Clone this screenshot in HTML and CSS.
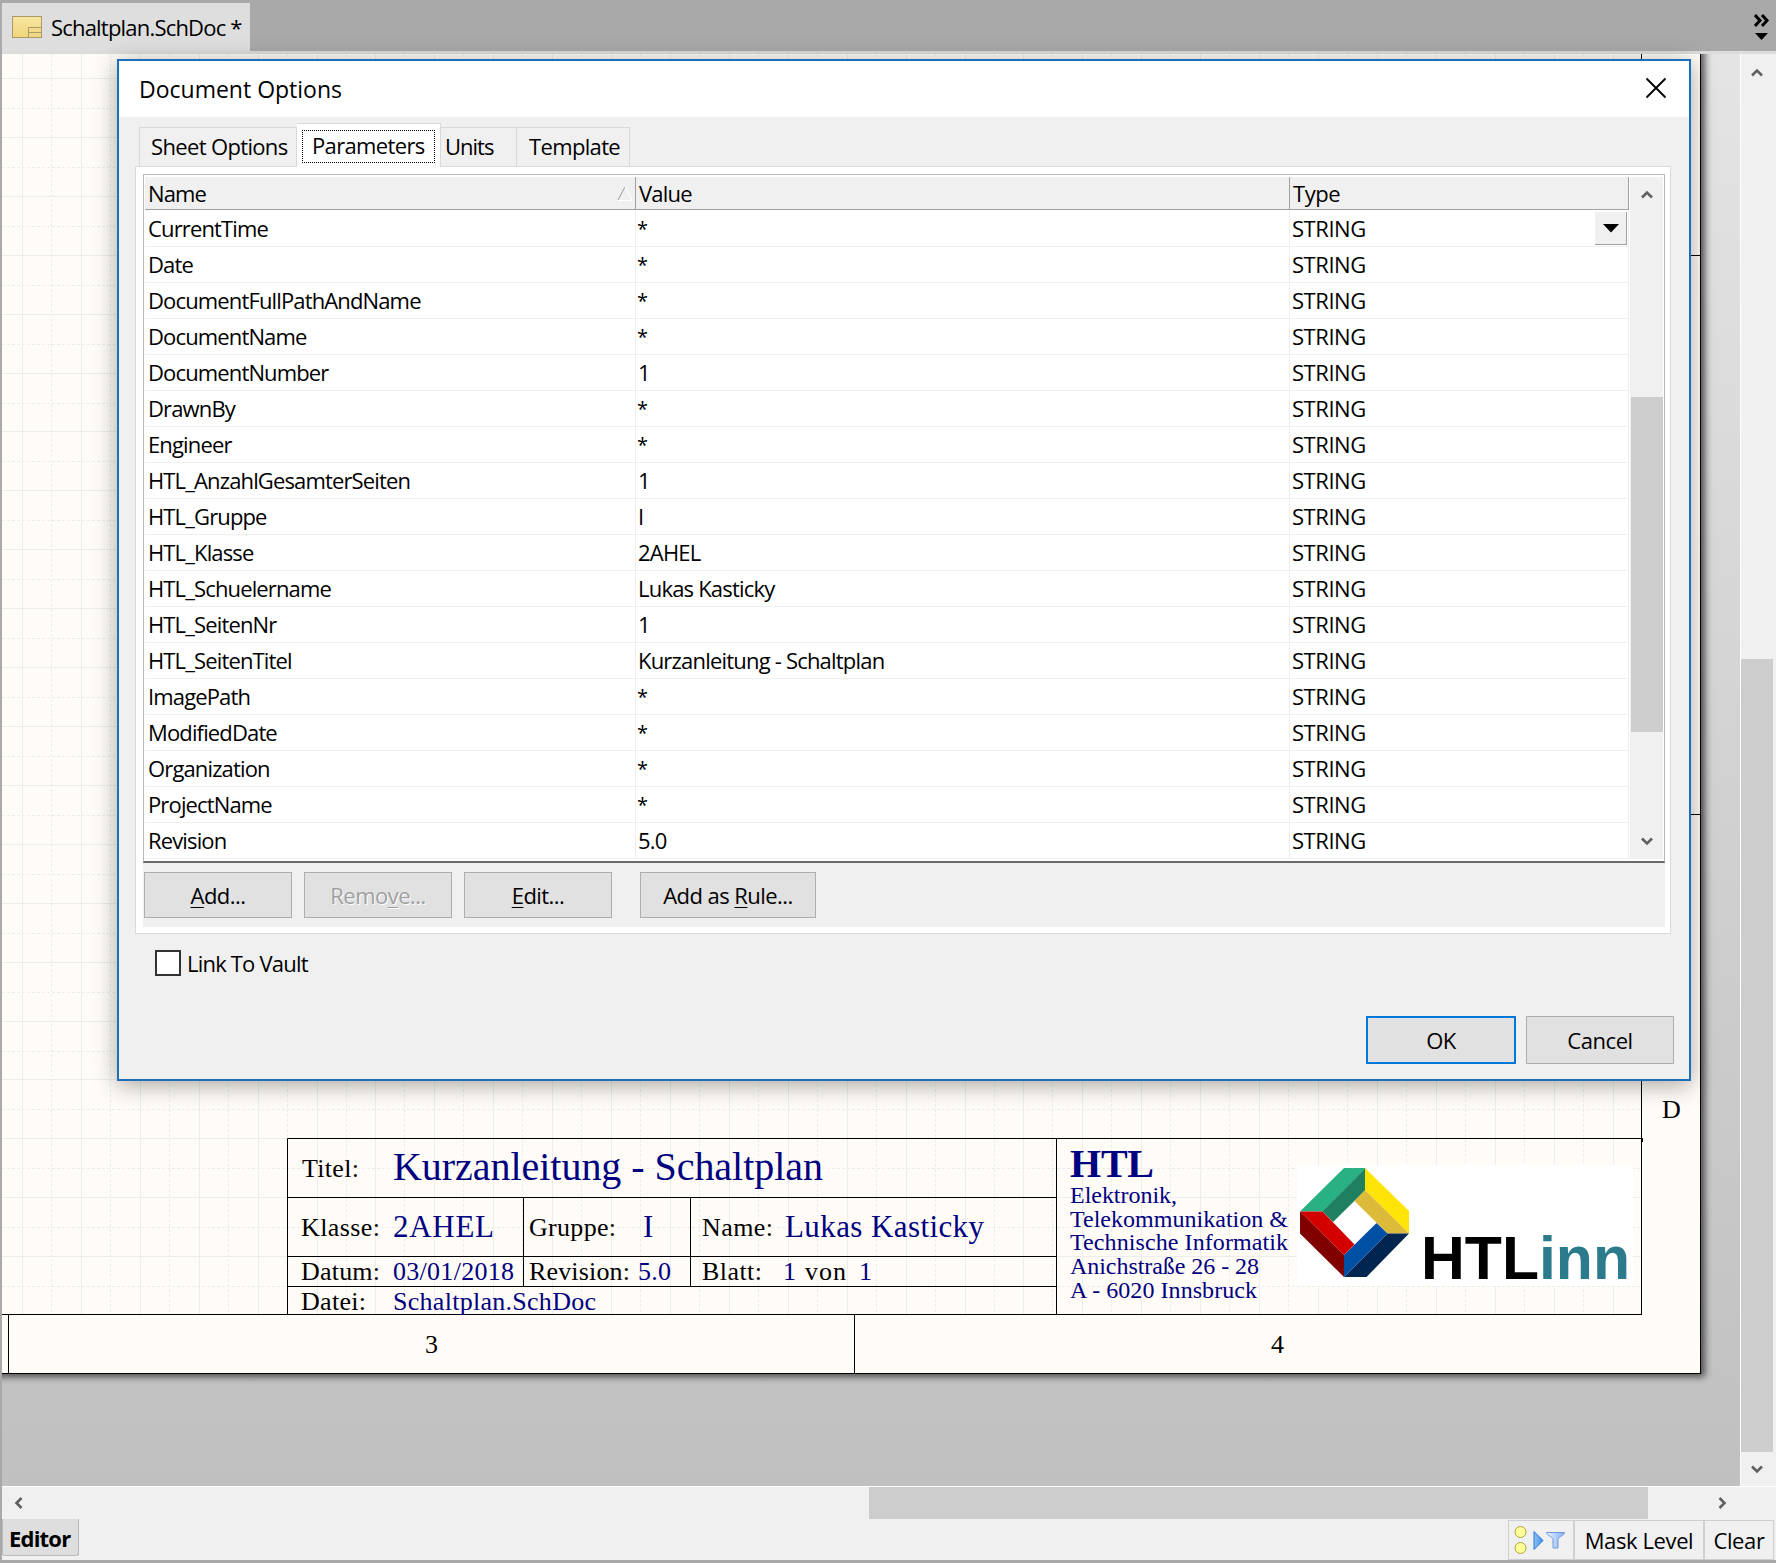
FILE: index.html
```
<!DOCTYPE html>
<html lang="de">
<head>
<meta charset="utf-8">
<title>Schaltplan.SchDoc</title>
<link rel="stylesheet" href="styles.css">
</head>
<body>
<div class="app">
  <header class="tabstrip">
    <div class="doc-tab">
      <svg class="doc-icon" width="30" height="22" viewBox="0 0 30 22">
        <defs><linearGradient id="doc" x1="0" y1="0" x2="0" y2="1"><stop offset="0" stop-color="#f7e5a1"/><stop offset="1" stop-color="#efd67b"/></linearGradient></defs>
        <rect x=".5" y=".5" width="29" height="21" fill="url(#doc)" stroke="#ab9a64"/>
        <path d="M16.500 21V11.500H29M17 16.500H29" fill="none" stroke="#ab9a64"/>
      </svg>
      <span>Schaltplan.SchDoc *</span>
    </div>
    <svg class="overflow" width="16" height="28" viewBox="0 0 16 28">
      <path d="M1 1l5 5.500-5 5.500M8 1l5 5.500-5 5.500" fill="none" stroke="#000" stroke-width="3"/>
      <path d="M1 19h13l-6.500 7z"/>
    </svg>
  </header>

  <main class="workspace">
    <section class="canvas">
      <svg class="sheet" width="1738" height="1432" viewBox="2 54 1738 1432">
        <defs><filter id="soft" x="-5%" y="-5%" width="110%" height="110%"><feGaussianBlur stdDeviation="3.500"/></filter></defs>
        <rect x="-20" y="30" width="1725" height="1347" fill="#000" opacity=".6" filter="url(#soft)"/>
        <rect x="2" y="54" width="1699" height="1319" fill="#fffcf7"/>
        <g id="grid" class="grid"></g>
        <rect x="1297" y="1165" width="336" height="121" fill="#fff"/>
        <path class="ink" d="M2 1373.500H1701M1700.500 54V1374M1641.500 54V1315M2 1314.500H1642M8.500 1314V1373M854.500 1314V1373M1642 255.500H1701M1642 814.500H1701M287.500 1314V1138.500H1642M1642.500 1138V1142M287 1197.500H1056M287 1256.500H1056M287 1286.500H1056M523.500 1197V1286M690.500 1197V1286M1056.500 1138V1314"/>
        <g class="lbl">
          <text x="302" y="1177" textLength="57">Titel:</text>
          <text x="301" y="1236" textLength="79">Klasse:</text>
          <text x="529" y="1236" textLength="87">Gruppe:</text>
          <text x="702" y="1236" textLength="71">Name:</text>
          <text x="301" y="1280" textLength="79">Datum:</text>
          <text x="529" y="1280" textLength="101">Revision:</text>
          <text x="702" y="1280" textLength="60">Blatt:</text>
          <text x="805" y="1280" textLength="41">von</text>
          <text x="301" y="1310" textLength="65">Datei:</text>
          <text x="425" y="1353">3</text>
          <text x="1271" y="1353">4</text>
          <text x="1662" y="1118">D</text>
        </g>
        <g class="val">
          <text class="big" x="393" y="1180" textLength="430">Kurzanleitung - Schaltplan</text>
          <text class="mid" x="393" y="1237" textLength="101">2AHEL</text>
          <text class="mid" x="643" y="1237">I</text>
          <text class="mid" x="785" y="1237" textLength="199">Lukas Kasticky</text>
          <text x="393" y="1280" textLength="121">03/01/2018</text>
          <text x="638" y="1280" textLength="33">5.0</text>
          <text x="783" y="1280">1</text>
          <text x="859" y="1280">1</text>
          <text x="393" y="1310" textLength="203">Schaltplan.SchDoc</text>
          <text class="head" x="1070" y="1177" textLength="84">HTL</text>
          <g class="addr">
            <text x="1070" y="1203" textLength="107">Elektronik,</text>
            <text x="1070" y="1227" textLength="218">Telekommunikation &amp;</text>
            <text x="1070" y="1250" textLength="218">Technische Informatik</text>
            <text x="1070" y="1274" textLength="189">Anichstraße 26 - 28</text>
            <text x="1070" y="1298" textLength="187">A - 6020 Innsbruck</text>
          </g>
        </g>
        <g>
          <path fill="#29b183" d="M1300 1211.500L1344 1168h21.500L1323 1211.500z"/>
          <path fill="#1e8060" d="M1322.500 1211.500L1365.500 1168v22L1333 1222z"/>
          <path fill="#fee406" d="M1365 1168L1409 1211v22.500L1365 1190z"/>
          <path fill="#dcbb3a" d="M1365 1190L1409 1233.500H1387.500L1354.500 1201z"/>
          <path fill="#00254e" d="M1409 1233.500L1366.500 1277H1344L1387.500 1233.500z"/>
          <path fill="#0050a5" d="M1344 1277V1255L1376.500 1223L1387.500 1233.500z"/>
          <path fill="#d40000" d="M1300 1211.500h22.500L1354.500 1244.500L1344 1255z"/>
          <path fill="#800000" d="M1300 1211.500L1344 1255v22L1300 1233.500z"/>
        </g>
        <text class="logo" x="1421" y="1279" textLength="118" lengthAdjust="spacingAndGlyphs">HTL</text>
        <text class="logo teal" x="1539" y="1279" textLength="91" lengthAdjust="spacingAndGlyphs">inn</text>
      </svg>
    </section>
    <div class="vscroll main-v">
      <svg class="chev" viewBox="0 0 12 10"><path d="M1 8.500L6 3.500L11 8.500"/></svg>
      <div class="thumb"></div>
      <svg class="chev" viewBox="0 0 12 10"><path d="M1 1.500L6 6.500L11 1.500"/></svg>
    </div>
  </main>

  <div class="hscroll">
    <svg class="hchev" viewBox="0 0 10 12"><path d="M8.500 1L3.500 6L8.500 11"/></svg>
    <div class="hthumb"></div>
    <svg class="hchev" viewBox="0 0 10 12"><path d="M1.500 1L6.500 6L1.500 11"/></svg>
  </div>

  <footer class="status">
    <div class="editor-tab">Editor</div>
    <div class="panels">
      <div class="cell icons">
        <svg width="52" height="30" viewBox="0 0 52 30">
          <defs>
            <linearGradient id="blue"><stop offset="0" stop-color="#8cc0f8"/><stop offset="1" stop-color="#3d8ee8"/></linearGradient>
            <linearGradient id="fun"><stop offset="0" stop-color="#e8f1ff"/><stop offset="1" stop-color="#7fb0f5"/></linearGradient>
          </defs>
          <circle cx="6.500" cy="7" r="5.500" fill="#ffff99" stroke="#a9a93c"/>
          <circle cx="6.500" cy="23" r="5.500" fill="#ffff99" stroke="#a9a93c"/>
          <path d="M20 6.500L29 15.500L20 24.500z" fill="url(#blue)" stroke="#2a78d4"/>
          <path d="M32.500 7.500h18c0 3-6 4-6.500 7v8.500h-5v-8.500c-.5-3-6.500-4-6.500-7z" fill="url(#fun)" stroke="#6f96d6"/>
        </svg>
      </div>
      <div class="cell mask">Mask Level</div>
      <div class="cell clear">Clear</div>
    </div>
  </footer>
</div>

<div class="dialog">
  <div class="titlebar">
    <span>Document Options</span>
    <svg width="22" height="22" viewBox="0 0 22 22"><path d="M1.500 1.500L20.500 20.500M20.500 1.500L1.500 20.500" stroke="#000" stroke-width="1.800"/></svg>
  </div>
  <nav class="tabs">
    <div class="tab t-sheet">Sheet Options</div>
    <div class="tab active"><span class="focus">Parameters</span></div>
    <div class="tab t-units">Units</div>
    <div class="tab t-tmpl">Template</div>
  </nav>
  <div class="page">
    <div class="grid-box">
      <div class="table">
        <div class="row th"><div>Name<svg class="sort" width="16" height="15" viewBox="0 0 16 15"><path d="M1 14L8 1" stroke="#999"/><path d="M8 1l7 13.500H1" fill="none" stroke="#fff"/></svg></div><div>Value</div><div>Type</div></div>
        <div class="row"><div>CurrentTime</div><div class="star">*</div><div>STRING<span class="drop"><svg width="16" height="9" viewBox="0 0 16 9"><path d="M0 0h16l-8 8.500z"/></svg></span></div></div>
        <div class="row"><div>Date</div><div class="star">*</div><div>STRING</div></div>
        <div class="row"><div>DocumentFullPathAndName</div><div class="star">*</div><div>STRING</div></div>
        <div class="row"><div>DocumentName</div><div class="star">*</div><div>STRING</div></div>
        <div class="row"><div>DocumentNumber</div><div>1</div><div>STRING</div></div>
        <div class="row"><div>DrawnBy</div><div class="star">*</div><div>STRING</div></div>
        <div class="row"><div>Engineer</div><div class="star">*</div><div>STRING</div></div>
        <div class="row"><div>HTL_AnzahlGesamterSeiten</div><div>1</div><div>STRING</div></div>
        <div class="row"><div>HTL_Gruppe</div><div>I</div><div>STRING</div></div>
        <div class="row"><div>HTL_Klasse</div><div>2AHEL</div><div>STRING</div></div>
        <div class="row"><div>HTL_Schuelername</div><div>Lukas Kasticky</div><div>STRING</div></div>
        <div class="row"><div>HTL_SeitenNr</div><div>1</div><div>STRING</div></div>
        <div class="row"><div>HTL_SeitenTitel</div><div>Kurzanleitung - Schaltplan</div><div>STRING</div></div>
        <div class="row"><div>ImagePath</div><div class="star">*</div><div>STRING</div></div>
        <div class="row"><div>ModifiedDate</div><div class="star">*</div><div>STRING</div></div>
        <div class="row"><div>Organization</div><div class="star">*</div><div>STRING</div></div>
        <div class="row"><div>ProjectName</div><div class="star">*</div><div>STRING</div></div>
        <div class="row"><div>Revision</div><div>5.0</div><div>STRING</div></div>
      </div>
      <div class="vscroll list-v">
        <svg class="chev" viewBox="0 0 12 10"><path d="M1 8.500L6 3.500L11 8.500"/></svg>
        <div class="thumb"></div>
        <svg class="chev" viewBox="0 0 12 10"><path d="M1 1.500L6 6.500L11 1.500"/></svg>
      </div>
    </div>
    <div class="actions">
      <div class="btn"><u>A</u>dd...</div>
      <div class="btn off">Remo<u>v</u>e...</div>
      <div class="btn"><u>E</u>dit...</div>
      <div class="btn rule">Add as <u>R</u>ule...</div>
    </div>
  </div>
  <div class="vault"><span class="box"></span>Link To Vault</div>
  <div class="buttons">
    <div class="btn ok">OK</div>
    <div class="btn">Cancel</div>
  </div>
</div>
<script src="grid.js"></script>
</body>
</html>
```
FILE: grid.js
```
// Sheet grid: solid lines every 58.9 units with dashed lines halfway between.
const STEP = 58.91;
let solid = '', dashed = '';
for (let k = 0; k < 28; k++) {
  const x = Math.round(22 + k * STEP) + 0.5;
  const d = Math.round(51 + k * STEP) + 0.5;
  if (x < 1640) solid += `M${x} 54V1314`;
  if (d < 1640) dashed += `M${d} 54V1314`;
}
for (let k = 0; k < 21; k++) {
  const y = Math.round(78 + k * STEP) + 0.5;
  const d = Math.round(108 + k * STEP) + 0.5;
  solid += `M2 ${y}H1641`;
  dashed += `M2 ${d}H1641`;
}
document.getElementById('grid').innerHTML =
  `<path d="${solid}"/><path stroke-dasharray="3 2" d="${dashed}"/>`;
```
FILE: styles.css
```
* { box-sizing: border-box; }
body {
  margin: 0;
  width: 1776px;
  height: 1563px;
  overflow: hidden;
  position: relative;
  font: 22px/30px "Open Sans", "Noto Sans", sans-serif;
  letter-spacing: -0.8px;
  color: #000;
  background: #f0f0f0;
}
.app {
  display: flex;
  flex-direction: column;
  height: 1563px;
  border-left: 2px solid #a9a9a9;
  border-bottom: 3px solid #a9a9a9;
}
.tabstrip {
  display: flex;
  justify-content: space-between;
  flex: none;
  height: 54px;
  padding-top: 3px;
  background: #a9a9a9;
  border-bottom: 3px solid #dcdcdc;
}
.doc-tab {
  display: flex;
  align-items: center;
  gap: 9px;
  width: 248px;
  height: 48px;
  padding: 0 0 1px 10px;
  background: #dedede;
  white-space: nowrap;
}
.overflow { margin: 11px 6px 0 0; }
.workspace { display: flex; height: 1432px; }
.canvas {
  width: 1738px;
  background: linear-gradient(#e4e4e4, #c0c0c0);
}
.sheet { display: block; }
.grid path { fill: none; stroke: #edeeec; }
.ink { fill: none; stroke: #000; stroke-width: 1; }
.lbl, .val { font-family: "Liberation Serif", serif; font-size: 26px; letter-spacing: 0; }
.val { fill: #000080; }
.big { font-size: 40px; }
.mid { font-size: 31px; }
.head { font-size: 40px; font-weight: bold; }
.addr { font-size: 24px; }
.logo { font: bold 61px "Liberation Sans", sans-serif; letter-spacing: 0; }
.teal { fill: #2b7b8c; }

.vscroll {
  display: flex;
  flex-direction: column;
  align-items: center;
  background: #f0f0f0;
}
.thumb { flex: none; background: #cdcdcd; width: 32px; }
.chev { flex: none; width: 12px; height: 10px; }
.chev:last-child { margin-top: auto; }
.hchev { width: 10px; height: 12px; }
.chev path, .hchev path { fill: none; stroke: #606060; stroke-width: 2.6; }
.main-v { width: 36px; border-left: 1px solid #fff; padding: 13px 3px 11px 0; }
.main-v .thumb { height: 793px; margin-top: 582px; }
.hscroll {
  display: flex;
  align-items: center;
  justify-content: space-between;
  height: 33px;
  border-top: 1px solid #fff;
  padding: 0 48px 0 11px;
}
.hthumb { width: 779px; height: 32px; margin-left: 775px; background: #cdcdcd; }
.status { display: flex; justify-content: space-between; height: 41px; }
.editor-tab {
  width: 77px;
  height: 37px;
  padding: 4px 0 0 6px;
  font-weight: 700;
  font-size: 22px;
  background: #dedede;
  border: solid #b9b9b9;
  border-width: 0 1px 1px 1px;
  border-radius: 0 0 3px 3px;
}
.panels { display: flex; margin-right: 2px; padding-top: 1px; }
.cell { height: 40px; border: 1px solid #cfcfcf; padding-top: 4px; text-align: center; white-space: nowrap; }
.icons { width: 66px; padding: 4px 2px 0 0; }
.mask { width: 130px; letter-spacing: -0.4px; }
.clear { width: 70px; letter-spacing: -0.4px; }

.dialog {
  position: absolute;
  left: 117px;
  top: 59px;
  width: 1574px;
  height: 1022px;
  display: flex;
  flex-direction: column;
  background: #f0f0f0;
  border: 2px solid #1b70b7;
  box-shadow: 0 4px 22px rgba(0, 0, 0, .34);
}
.titlebar {
  display: flex;
  justify-content: space-between;
  align-items: center;
  flex: none;
  height: 56px;
  padding: 0 22px 0 20px;
  background: #fff;
  font-size: 23px;
  letter-spacing: 0;
}
.titlebar svg { margin-bottom: 3px; }
.tabs { display: flex; align-items: flex-end; height: 49px; padding-left: 20px; flex: none; letter-spacing: -0.65px; }
.tab {
  height: 39px;
  padding-top: 3px;
  border: 1px solid #d9d9d9;
  border-bottom: 0;
  border-left: 0;
  white-space: nowrap;
}
.t-sheet { width: 158px; padding-left: 11px; border-left: 1px solid #d9d9d9; }
.t-units { width: 76px; padding-left: 4px; letter-spacing: -1px; }
.t-tmpl { width: 113px; padding-left: 12px; }
.active { width: 144px; height: 44px; margin-bottom: -1px; background: #fff; padding: 6px 5px 0; position: relative; }
.focus { display: block; height: 33px; line-height: 28px; padding-left: 9px; border: 1px dotted #000; }
.page {
  width: 1536px;
  height: 768px;
  flex: none;
  margin-left: 16px;
  padding: 7px 6px 7px 7px;
  background: #fff;
  border: 1px solid #d9d9d9;
}
.grid-box {
  display: flex;
  height: 689px;
  width: 1522px;
  padding: 2px 1px 0 1px;
  border: 1px solid #b9b9b9;
  border-bottom: 2px solid #696969;
}
.table { width: 1484px; }
.row { display: grid; grid-template-columns: 491px 654px 339px; height: 36px; line-height: 35px; }
.row > div { border: solid #efefef; border-width: 0 1px 1px 0; padding-left: 2px; position: relative; white-space: nowrap; }
.row > div:first-child { padding-left: 3px; letter-spacing: -0.86px; }
.row > div:last-child { letter-spacing: -0.45px; }
.row > .star { font-size: 20px; padding-left: 1px; }
.row.th { height: 33px; line-height: 32px; margin-bottom: 1px; background: #f0f0f0; }
.row.th > div { border-color: #a0a0a0; padding-left: 3px; }
.sort { position: absolute; right: 2px; top: 9px; }
.drop {
  position: absolute;
  right: 1px;
  top: 1px;
  width: 32px;
  height: 33px;
  display: flex;
  align-items: center;
  justify-content: center;
  background: #f0f0f0;
  border: solid #a0a0a0;
  border-width: 0 1px 1px 0;
}
.list-v { width: 33px; height: 682px; margin-left: 1px; padding: 12px 0 12px; }
.list-v .thumb { height: 335px; margin-top: 198px; }
.actions { display: flex; height: 64px; width: 1522px; padding: 9px 0 0 1px; gap: 12px; background: #f0f0f0; letter-spacing: -0.55px; }
.btn {
  width: 148px;
  height: 46px;
  line-height: 45px;
  text-align: center;
  background: #e1e1e1;
  border: 1px solid #adadad;
}
.btn u { text-underline-offset: 3px; text-decoration-thickness: 1px; }
.off { color: #a0a0a0; text-shadow: 1px 1px #fff; }
.rule { width: 176px; margin-left: 16px; }
.vault { display: flex; align-items: center; gap: 6px; padding: 14px 0 0 36px; height: 44px; }
.box { width: 26px; height: 26px; border: 2px solid #333; background: #fff; }
.buttons { display: flex; justify-content: flex-end; gap: 10px; margin-top: 38px; padding-right: 15px; letter-spacing: -0.45px; }
.buttons .btn { height: 48px; line-height: 47px; }
.buttons .ok { width: 150px; border: 2px solid #0078d7; line-height: 45px; }
```
